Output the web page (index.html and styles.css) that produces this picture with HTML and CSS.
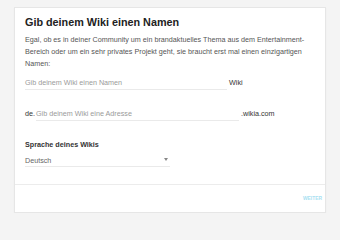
FILE: index.html
```html
<!DOCTYPE html>
<html lang="de">
<head>
<meta charset="utf-8">
<link rel="stylesheet" href="styles.css">
</head>
<body>
<div class="card">
  <div class="main">
    <h1 class="title">Gib deinem Wiki einen Namen</h1>
    <p class="intro">Egal, ob es in deiner Community um ein brandaktuelles Thema aus dem Entertainment-Bereich oder um ein sehr privates Projekt geht, sie braucht erst mal einen einzigartigen Namen:</p>
    <div class="row row-name">
      <div class="field field-name">Gib deinem Wiki einen Namen</div>
      <span class="suffix">Wiki</span>
    </div>
    <div class="row row-addr">
      <span class="prefix">de.</span>
      <div class="field field-addr">Gib deinem Wiki eine Adresse</div>
      <span class="suffix">.wikia.com</span>
    </div>
    <div class="label">Sprache deines Wikis</div>
    <div class="select">
      <span class="select-value">Deutsch</span>
      <span class="arrow"></span>
    </div>
  </div>
  <div class="footer">
    <span class="next">WEITER</span>
  </div>
</div>
</body>
</html>
```
FILE: styles.css
```css
html, body {
  margin: 0;
  padding: 0;
  background: #f4f4f4;
}
body {
  padding: 7px 14px 0 14px;
  font-family: "Liberation Sans", Arial, sans-serif;
}
.card {
  width: 310px;
  height: 204px;
  background: #fff;
  border: 1px solid #e6e6e6;
  box-shadow: 0 1px 1px rgba(0,0,0,0.06);
  display: flex;
  flex-direction: column;
}
.main {
  padding: 7px 10px 0 10px;
  height: 177px;
  flex: none;
  box-sizing: border-box;
  border-bottom: 1px solid #ececec;
}
.title {
  margin: 0;
  font-size: 10.8px;
  font-weight: bold;
  color: #222;
  line-height: 15px;
}
.intro {
  margin: 4px 0 0 0;
  font-size: 7.2px;
  line-height: 12px;
  color: #555;
}
.row {
  display: flex;
  align-items: baseline;
  font-size: 7.2px;
  line-height: 10px;
}
.row-name { margin-top: 8px; }
.row-addr { margin-top: 19px; }
.field {
  color: #9a9a9a;
  border-bottom: 1px solid #eaeaea;
  padding-bottom: 1px;
}
.field-name { width: 202px; }
.field-addr { width: 203px; margin-left: 1px; }
.suffix { color: #333; margin-left: 2px; }
.prefix { color: #333; }
.label {
  margin-top: 19px;
  font-size: 7.2px;
  font-weight: bold;
  color: #333;
  line-height: 10px;
}
.select {
  margin-top: 6px;
  width: 145px;
  display: flex;
  justify-content: space-between;
  align-items: center;
  border-bottom: 1px solid #eaeaea;
  font-size: 7.2px;
  color: #666;
  line-height: 10px;
}
.arrow {
  width: 0;
  height: 0;
  border-left: 2.5px solid transparent;
  border-right: 2.5px solid transparent;
  border-top: 3px solid #888;
  margin-right: 2px;
  margin-bottom: 3px;
}
.footer {
  flex: 1;
  display: flex;
  justify-content: flex-end;
  align-items: center;
  padding-right: 3px;
}
.next {
  font-size: 4.9px;
  font-weight: bold;
  color: #a9e1f2;
}
```
